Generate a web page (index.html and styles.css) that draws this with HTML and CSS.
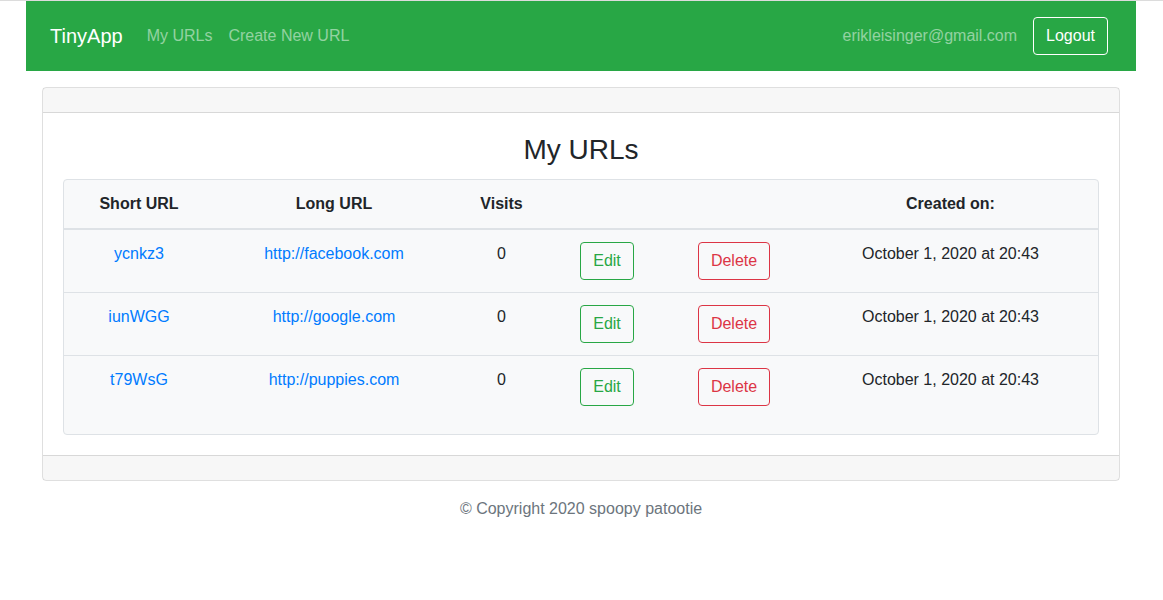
FILE: index.html
```html
<!DOCTYPE html>
<html>
<head>
<meta charset="utf-8">
<link rel="stylesheet" href="styles.css">
</head>
<body>
<div class="page">
  <nav class="navbar">
    <a class="brand" href="#">TinyApp</a>
    <a class="nav-link" href="#">My URLs</a>
    <a class="nav-link" href="#">Create New URL</a>
    <span class="spacer"></span>
    <span class="nav-user">erikleisinger@gmail.com</span>
    <button class="btn btn-logout">Logout</button>
  </nav>
  <main class="card">
    <div class="card-header"></div>
    <div class="card-body">
      <h3 class="title">My URLs</h3>
      <div class="table-wrap">
        <table class="table">
          <colgroup>
            <col class="c1"><col class="c2"><col class="c3"><col class="c4"><col class="c5"><col class="c6">
          </colgroup>
          <thead>
            <tr><th>Short URL</th><th>Long URL</th><th>Visits</th><th></th><th></th><th>Created on:</th></tr>
          </thead>
          <tbody>
            <tr>
              <td><a href="#">ycnkz3</a></td>
              <td><a href="#">http://facebook.com</a></td>
              <td>0</td>
              <td><button class="btn btn-edit">Edit</button></td>
              <td><button class="btn btn-delete">Delete</button></td>
              <td>October 1, 2020 at 20:43</td>
            </tr>
            <tr>
              <td><a href="#">iunWGG</a></td>
              <td><a href="#">http://google.com</a></td>
              <td>0</td>
              <td><button class="btn btn-edit">Edit</button></td>
              <td><button class="btn btn-delete">Delete</button></td>
              <td>October 1, 2020 at 20:43</td>
            </tr>
            <tr>
              <td><a href="#">t79WsG</a></td>
              <td><a href="#">http://puppies.com</a></td>
              <td>0</td>
              <td><button class="btn btn-edit">Edit</button></td>
              <td><button class="btn btn-delete">Delete</button></td>
              <td>October 1, 2020 at 20:43</td>
            </tr>
          </tbody>
        </table>
      </div>
    </div>
    <div class="card-footer"></div>
  </main>
  <footer class="copyright">© Copyright 2020 spoopy patootie</footer>
</div>
</body>
</html>
```

FILE: styles.css
```css
* { box-sizing: border-box; }
html, body { margin: 0; padding: 0; }
body {
  font-family: "Liberation Sans", Arial, sans-serif;
  font-size: 16px;
  line-height: 1.5;
  color: #212529;
  background: #fff;
  border-top: 1px solid #dcdcdc;
}
a { text-decoration: none; color: #007bff; }
.page { margin: 0 27px 0 26px; }
.navbar {
  display: flex;
  align-items: center;
  background: #28a745;
  height: 70px;
  padding: 0 28px 0 24px;
}
.brand {
  color: #fff;
  font-size: 20px;
  line-height: 30px;
  margin-right: 16px;
}
.nav-link {
  color: rgba(255,255,255,.5);
  padding: 0 8px;
}
.spacer { flex: 1; }
.nav-user {
  color: rgba(255,255,255,.5);
  margin-right: 16px;
}
.btn {
  font-family: inherit;
  font-size: 16px;
  line-height: 24px;
  padding: 6px 12px;
  border-radius: 4px;
  background: transparent;
  cursor: pointer;
}
.btn-logout { border: 1px solid #fff; color: #fff; }
.btn-edit { border: 1px solid #28a745; color: #28a745; }
.btn-delete { border: 1px solid #dc3545; color: #dc3545; }
.card {
  display: block;
  margin: 16px 16px 0;
  border: 1px solid rgba(0,0,0,.125);
  border-radius: 4px;
}
.card-header {
  height: 25px;
  background: rgba(0,0,0,.03);
  border-bottom: 1px solid rgba(0,0,0,.125);
}
.card-footer {
  height: 25px;
  background: rgba(0,0,0,.03);
  border-top: 1px solid rgba(0,0,0,.125);
}
.card-body { padding: 20px; }
.title {
  margin: 0 0 12px;
  font-size: 28px;
  font-weight: 500;
  line-height: 1.2;
  text-align: center;
}
.table-wrap {
  border: 1px solid #dee2e6;
  border-radius: 4px;
  background: #f8f9fa;
  padding-bottom: 16px;
}
.table {
  width: 100%;
  border-collapse: collapse;
  table-layout: fixed;
}
.c1 { width: 150px; }
.c2 { width: 240px; }
.c3 { width: 95px; }
.c4 { width: 116px; }
.c5 { width: 138px; }
.c6 { width: auto; }
.table th, .table td {
  padding: 12px;
  text-align: center;
  vertical-align: top;
}
.table th {
  font-weight: bold;
  border-bottom: 2px solid #dee2e6;
}
.table tbody tr + tr td { border-top: 1px solid #dee2e6; }
.copyright {
  text-align: center;
  color: #6c757d;
  margin-top: 16px;
}
```
